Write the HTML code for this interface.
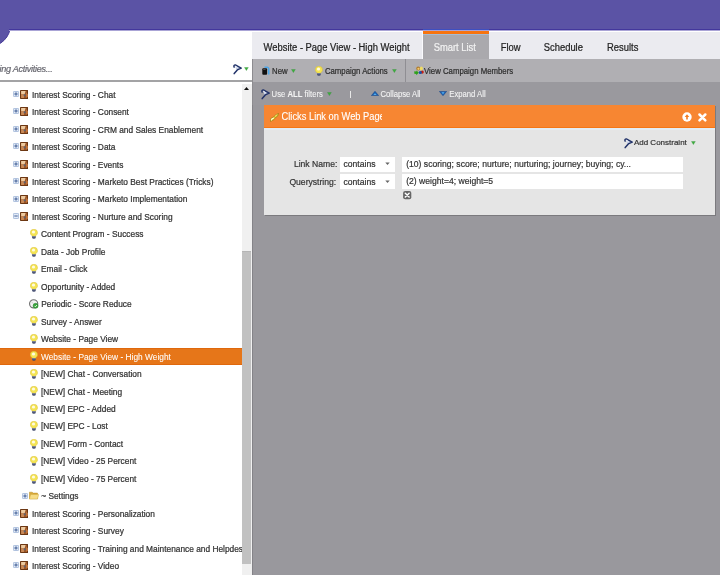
<!DOCTYPE html>
<html><head><meta charset="utf-8">
<style>
*{margin:0;padding:0;box-sizing:border-box}
svg{display:block}
html,body{width:720px;height:575px;overflow:hidden;background:#99989d;font-family:"Liberation Sans",sans-serif;-webkit-text-stroke-width:0.2px}
.abs{position:absolute}
#hdr{position:absolute;left:0;top:0;width:720px;height:29px;background:#5b53a5}
#hline{position:absolute;left:9px;top:29px;width:712px;height:1px;background:#43379c}
#hline2{position:absolute;left:9px;top:30px;width:712px;height:1px;background:#aaa4d6}
#bump{position:absolute;left:-33px;top:3px;width:44px;height:44px;border-radius:50%;background:#5b53a5;border:1.2px solid #463b98}
#side{position:absolute;left:0;top:30px;width:252px;height:545px;background:#fff;overflow:hidden}
#sidehdr{position:absolute;left:0;top:0;width:252px;height:50px;background:#fff}
#sideline{position:absolute;left:0;top:49.7px;width:252px;height:2.3px;background:#a3a3a5}
.row{position:absolute;left:0;width:241.5px;height:17.46px;font-size:8.35px;letter-spacing:0px;-webkit-text-stroke-width:0.22px;line-height:17.46px;color:#333;white-space:nowrap}
.row i{position:absolute;display:block;line-height:0}
.row .tt{position:absolute;top:1.0px;transform:scaleY(1.1);transform-origin:0 11.6px}
.row.sel{background:#e67619;border-top:1px solid #df680d;border-bottom:1px solid #df680d;color:#fff;-webkit-text-stroke-width:0.05px}
.row.sel .tt{top:0.3px}
.row.sel i{margin-top:-1px}
#tree{position:absolute;left:0;top:0;width:252px;height:575px;overflow:hidden}
#wrap{position:absolute;left:0;top:0;width:720px;height:575px;will-change:transform}
#track{position:absolute;left:241.5px;top:84px;width:10.5px;height:491px;background:#f0f0f0}
#thumb{position:absolute;left:242.2px;top:251.1px;width:8.5px;height:312.5px;background:#c1c1c1;border-top:1px solid #b5b5b5}
#sbar{position:absolute;left:252.3px;top:82px;width:1.2px;height:493px;background:#848388}
#tabs{position:absolute;left:252px;top:31px;width:468px;height:28px;background:#ebebf0;border-top:1px solid #fff;font-size:9.4px;color:#222}
#tabs .t{transform:scaleY(1.13);transform-origin:0 8.3px}
.tab{position:absolute;top:0;height:28px;line-height:28px;white-space:nowrap}
#tb1{position:absolute;left:252px;top:59px;width:468px;height:23px;background:#b0afb3;border-left:1px solid #8d8c90;font-size:7.8px;color:#2e2e2e}
#tb2{position:absolute;left:252px;top:82px;width:468px;height:23px;background:#9a999e;border-left:1px solid #8d8c90;font-size:7.7px;color:#f4f4f4;-webkit-text-stroke-width:0.08px}
.t{position:absolute;white-space:nowrap;line-height:10px}
#tb1 .t{transform:scaleY(1.1);transform-origin:0 7.7px;margin-top:1.1px}
#tb2 .t{transform:scaleY(1.16);transform-origin:0 7.7px;margin-top:0.9px}
.tri{position:absolute;width:0;height:0;border-left:2px solid transparent;border-right:2px solid transparent;border-top:3px solid #3fa53a}
#panel{position:absolute;left:263.5px;top:105px;width:451.5px;height:110px;background:#e5e5e5;box-shadow:1px 1px 0 #7b7a7e}
#phdr{position:absolute;left:0;top:0;width:451.5px;height:23px;background:#f78632;border-bottom:1.3px solid #f57716;overflow:hidden}
#phl{position:absolute;left:0;top:23.2px;width:451.5px;height:1.6px;background:#e3edf5}
.lbl{position:absolute;font-size:8.6px;color:#333;white-space:nowrap;line-height:10px}
.box{position:absolute;background:#fff;font-size:8.6px;color:#333;white-space:nowrap;line-height:15px}
.bt{display:inline-block;transform:scaleY(1.12);transform-origin:0 10.5px;margin-top:0.7px;vertical-align:top}
</style></head><body><div id="wrap">
<div id="side">
  <div id="sidehdr">
    <div class="abs" style="left:-26.6px;top:34px;font-size:9.1px;letter-spacing:-0.28px;font-style:italic;color:#66666e;white-space:nowrap;line-height:10px">Marketing Activities...</div>
  </div>
  <div id="sideline"></div>
  <i class="abs" style="left:233.4px;top:33.5px;line-height:0"><svg width="9" height="11" viewBox="0 0 9 11"><path d="M2.2 1.5L7.2 4.1L3.2 5.6Z" fill="#c4cfe8"/><path d="M1.1 3.1Q0.4 1.0 2.3 0.9L8.2 4.1L4.3 5.9L1.2 9.6" stroke="#22336a" stroke-width="1.5" stroke-linejoin="round" stroke-linecap="round" fill="none"/><path d="M2.3 2.2L4.4 3.5" stroke="#fff" stroke-width="0.9"/></svg></i>
  <i class="abs" style="left:243.9px;top:36.7px;;line-height:0"><svg width="5" height="4" viewBox="0 0 5 4"><path d="M0.5 0.5H4.3L2.4 3.6Z" fill="#3cae3c" stroke="#2a8a2e" stroke-width="0.3"/></svg></i>
</div>
<div id="tree">
<div class="row" style="top:85.70px"><i class="ex" style="left:12.5px;top:5.2px"><svg width="6" height="6" viewBox="0 0 6 6"><rect x="0.35" y="0.35" width="5.3" height="5.3" rx="1.1" fill="#e4ecf8" stroke="#86a1cc" stroke-width="0.7"/><path d="M1.3 3h3.4" stroke="#34548c" stroke-width="0.9"/><path d="M3 1.3v3.4" stroke="#34548c" stroke-width="0.9"/></svg></i><i class="ic" style="left:20.4px;top:4.1px"><svg width="8" height="9" viewBox="0 0 8 9"><rect x="0" y="0" width="8.2" height="9" rx="0.9" fill="#5a2a0b"/><rect x="0.7" y="0.7" width="6.6" height="7.6" fill="#9c5627"/><path d="M1.1 1.1H5.6L4.6 4.2H1.1Z" fill="#eccaa0"/><path d="M1.1 4.2H4.6L3.8 7.9H1.1Z" fill="#c98a58"/><circle cx="4.7" cy="5.3" r="1.1" fill="#5d6270"/><path d="M6 2.6L7.9 4.2V6.8L6 7.8Z" fill="#c0733a"/></svg></i><span class="tt" style="left:32px">Interest Scoring - Chat</span></div>
<div class="row" style="top:103.16px"><i class="ex" style="left:12.5px;top:5.2px"><svg width="6" height="6" viewBox="0 0 6 6"><rect x="0.35" y="0.35" width="5.3" height="5.3" rx="1.1" fill="#e4ecf8" stroke="#86a1cc" stroke-width="0.7"/><path d="M1.3 3h3.4" stroke="#34548c" stroke-width="0.9"/><path d="M3 1.3v3.4" stroke="#34548c" stroke-width="0.9"/></svg></i><i class="ic" style="left:20.4px;top:4.1px"><svg width="8" height="9" viewBox="0 0 8 9"><rect x="0" y="0" width="8.2" height="9" rx="0.9" fill="#5a2a0b"/><rect x="0.7" y="0.7" width="6.6" height="7.6" fill="#9c5627"/><path d="M1.1 1.1H5.6L4.6 4.2H1.1Z" fill="#eccaa0"/><path d="M1.1 4.2H4.6L3.8 7.9H1.1Z" fill="#c98a58"/><circle cx="4.7" cy="5.3" r="1.1" fill="#5d6270"/><path d="M6 2.6L7.9 4.2V6.8L6 7.8Z" fill="#c0733a"/></svg></i><span class="tt" style="left:32px">Interest Scoring - Consent</span></div>
<div class="row" style="top:120.62px"><i class="ex" style="left:12.5px;top:5.2px"><svg width="6" height="6" viewBox="0 0 6 6"><rect x="0.35" y="0.35" width="5.3" height="5.3" rx="1.1" fill="#e4ecf8" stroke="#86a1cc" stroke-width="0.7"/><path d="M1.3 3h3.4" stroke="#34548c" stroke-width="0.9"/><path d="M3 1.3v3.4" stroke="#34548c" stroke-width="0.9"/></svg></i><i class="ic" style="left:20.4px;top:4.1px"><svg width="8" height="9" viewBox="0 0 8 9"><rect x="0" y="0" width="8.2" height="9" rx="0.9" fill="#5a2a0b"/><rect x="0.7" y="0.7" width="6.6" height="7.6" fill="#9c5627"/><path d="M1.1 1.1H5.6L4.6 4.2H1.1Z" fill="#eccaa0"/><path d="M1.1 4.2H4.6L3.8 7.9H1.1Z" fill="#c98a58"/><circle cx="4.7" cy="5.3" r="1.1" fill="#5d6270"/><path d="M6 2.6L7.9 4.2V6.8L6 7.8Z" fill="#c0733a"/></svg></i><span class="tt" style="left:32px">Interest Scoring - CRM and Sales Enablement</span></div>
<div class="row" style="top:138.08px"><i class="ex" style="left:12.5px;top:5.2px"><svg width="6" height="6" viewBox="0 0 6 6"><rect x="0.35" y="0.35" width="5.3" height="5.3" rx="1.1" fill="#e4ecf8" stroke="#86a1cc" stroke-width="0.7"/><path d="M1.3 3h3.4" stroke="#34548c" stroke-width="0.9"/><path d="M3 1.3v3.4" stroke="#34548c" stroke-width="0.9"/></svg></i><i class="ic" style="left:20.4px;top:4.1px"><svg width="8" height="9" viewBox="0 0 8 9"><rect x="0" y="0" width="8.2" height="9" rx="0.9" fill="#5a2a0b"/><rect x="0.7" y="0.7" width="6.6" height="7.6" fill="#9c5627"/><path d="M1.1 1.1H5.6L4.6 4.2H1.1Z" fill="#eccaa0"/><path d="M1.1 4.2H4.6L3.8 7.9H1.1Z" fill="#c98a58"/><circle cx="4.7" cy="5.3" r="1.1" fill="#5d6270"/><path d="M6 2.6L7.9 4.2V6.8L6 7.8Z" fill="#c0733a"/></svg></i><span class="tt" style="left:32px">Interest Scoring - Data</span></div>
<div class="row" style="top:155.54px"><i class="ex" style="left:12.5px;top:5.2px"><svg width="6" height="6" viewBox="0 0 6 6"><rect x="0.35" y="0.35" width="5.3" height="5.3" rx="1.1" fill="#e4ecf8" stroke="#86a1cc" stroke-width="0.7"/><path d="M1.3 3h3.4" stroke="#34548c" stroke-width="0.9"/><path d="M3 1.3v3.4" stroke="#34548c" stroke-width="0.9"/></svg></i><i class="ic" style="left:20.4px;top:4.1px"><svg width="8" height="9" viewBox="0 0 8 9"><rect x="0" y="0" width="8.2" height="9" rx="0.9" fill="#5a2a0b"/><rect x="0.7" y="0.7" width="6.6" height="7.6" fill="#9c5627"/><path d="M1.1 1.1H5.6L4.6 4.2H1.1Z" fill="#eccaa0"/><path d="M1.1 4.2H4.6L3.8 7.9H1.1Z" fill="#c98a58"/><circle cx="4.7" cy="5.3" r="1.1" fill="#5d6270"/><path d="M6 2.6L7.9 4.2V6.8L6 7.8Z" fill="#c0733a"/></svg></i><span class="tt" style="left:32px">Interest Scoring - Events</span></div>
<div class="row" style="top:173.00px"><i class="ex" style="left:12.5px;top:5.2px"><svg width="6" height="6" viewBox="0 0 6 6"><rect x="0.35" y="0.35" width="5.3" height="5.3" rx="1.1" fill="#e4ecf8" stroke="#86a1cc" stroke-width="0.7"/><path d="M1.3 3h3.4" stroke="#34548c" stroke-width="0.9"/><path d="M3 1.3v3.4" stroke="#34548c" stroke-width="0.9"/></svg></i><i class="ic" style="left:20.4px;top:4.1px"><svg width="8" height="9" viewBox="0 0 8 9"><rect x="0" y="0" width="8.2" height="9" rx="0.9" fill="#5a2a0b"/><rect x="0.7" y="0.7" width="6.6" height="7.6" fill="#9c5627"/><path d="M1.1 1.1H5.6L4.6 4.2H1.1Z" fill="#eccaa0"/><path d="M1.1 4.2H4.6L3.8 7.9H1.1Z" fill="#c98a58"/><circle cx="4.7" cy="5.3" r="1.1" fill="#5d6270"/><path d="M6 2.6L7.9 4.2V6.8L6 7.8Z" fill="#c0733a"/></svg></i><span class="tt" style="left:32px">Interest Scoring - Marketo Best Practices (Tricks)</span></div>
<div class="row" style="top:190.46px"><i class="ex" style="left:12.5px;top:5.2px"><svg width="6" height="6" viewBox="0 0 6 6"><rect x="0.35" y="0.35" width="5.3" height="5.3" rx="1.1" fill="#e4ecf8" stroke="#86a1cc" stroke-width="0.7"/><path d="M1.3 3h3.4" stroke="#34548c" stroke-width="0.9"/><path d="M3 1.3v3.4" stroke="#34548c" stroke-width="0.9"/></svg></i><i class="ic" style="left:20.4px;top:4.1px"><svg width="8" height="9" viewBox="0 0 8 9"><rect x="0" y="0" width="8.2" height="9" rx="0.9" fill="#5a2a0b"/><rect x="0.7" y="0.7" width="6.6" height="7.6" fill="#9c5627"/><path d="M1.1 1.1H5.6L4.6 4.2H1.1Z" fill="#eccaa0"/><path d="M1.1 4.2H4.6L3.8 7.9H1.1Z" fill="#c98a58"/><circle cx="4.7" cy="5.3" r="1.1" fill="#5d6270"/><path d="M6 2.6L7.9 4.2V6.8L6 7.8Z" fill="#c0733a"/></svg></i><span class="tt" style="left:32px">Interest Scoring - Marketo Implementation</span></div>
<div class="row" style="top:207.92px"><i class="ex" style="left:12.5px;top:5.2px"><svg width="6" height="6" viewBox="0 0 6 6"><rect x="0.35" y="0.35" width="5.3" height="5.3" rx="1.1" fill="#e4ecf8" stroke="#86a1cc" stroke-width="0.7"/><path d="M1.3 3h3.4" stroke="#34548c" stroke-width="0.9"/></svg></i><i class="ic" style="left:20.4px;top:4.1px"><svg width="8" height="9" viewBox="0 0 8 9"><rect x="0" y="0" width="8.2" height="9" rx="0.9" fill="#5a2a0b"/><rect x="0.7" y="0.7" width="6.6" height="7.6" fill="#9c5627"/><path d="M1.1 1.1H5.6L4.6 4.2H1.1Z" fill="#eccaa0"/><path d="M1.1 4.2H4.6L3.8 7.9H1.1Z" fill="#c98a58"/><circle cx="4.7" cy="5.3" r="1.1" fill="#5d6270"/><path d="M6 2.6L7.9 4.2V6.8L6 7.8Z" fill="#c0733a"/></svg></i><span class="tt" style="left:32px">Interest Scoring - Nurture and Scoring</span></div>
<div class="row" style="top:225.38px"><i class="ic" style="left:30px;top:3.8px"><svg width="8" height="10" viewBox="0 0 8 10"><path d="M3.9 0.2A3.6 3.6 0 0 1 7.5 3.8C7.5 5.2 6.5 5.9 5.9 6.6L5.8 7.4H2L1.9 6.6C1.3 5.9 0.3 5.2 0.3 3.8A3.6 3.6 0 0 1 3.9 0.2Z" fill="#f4e454" stroke="#d9bd33" stroke-width="0.5"/><ellipse cx="3.5" cy="3" rx="1.6" ry="1.5" fill="#fffbe0"/><path d="M2.1 7.2H5.7V8.8Q5.7 9.8 3.9 9.8Q2.1 9.8 2.1 8.8Z" fill="#3f476a"/><rect x="2.2" y="7.5" width="3.4" height="0.7" fill="#8c9abf"/></svg></i><span class="tt" style="left:41px">Content Program - Success</span></div>
<div class="row" style="top:242.84px"><i class="ic" style="left:30px;top:3.8px"><svg width="8" height="10" viewBox="0 0 8 10"><path d="M3.9 0.2A3.6 3.6 0 0 1 7.5 3.8C7.5 5.2 6.5 5.9 5.9 6.6L5.8 7.4H2L1.9 6.6C1.3 5.9 0.3 5.2 0.3 3.8A3.6 3.6 0 0 1 3.9 0.2Z" fill="#f4e454" stroke="#d9bd33" stroke-width="0.5"/><ellipse cx="3.5" cy="3" rx="1.6" ry="1.5" fill="#fffbe0"/><path d="M2.1 7.2H5.7V8.8Q5.7 9.8 3.9 9.8Q2.1 9.8 2.1 8.8Z" fill="#3f476a"/><rect x="2.2" y="7.5" width="3.4" height="0.7" fill="#8c9abf"/></svg></i><span class="tt" style="left:41px">Data - Job Profile</span></div>
<div class="row" style="top:260.30px"><i class="ic" style="left:30px;top:3.8px"><svg width="8" height="10" viewBox="0 0 8 10"><path d="M3.9 0.2A3.6 3.6 0 0 1 7.5 3.8C7.5 5.2 6.5 5.9 5.9 6.6L5.8 7.4H2L1.9 6.6C1.3 5.9 0.3 5.2 0.3 3.8A3.6 3.6 0 0 1 3.9 0.2Z" fill="#f4e454" stroke="#d9bd33" stroke-width="0.5"/><ellipse cx="3.5" cy="3" rx="1.6" ry="1.5" fill="#fffbe0"/><path d="M2.1 7.2H5.7V8.8Q5.7 9.8 3.9 9.8Q2.1 9.8 2.1 8.8Z" fill="#3f476a"/><rect x="2.2" y="7.5" width="3.4" height="0.7" fill="#8c9abf"/></svg></i><span class="tt" style="left:41px">Email - Click</span></div>
<div class="row" style="top:277.76px"><i class="ic" style="left:30px;top:3.8px"><svg width="8" height="10" viewBox="0 0 8 10"><path d="M3.9 0.2A3.6 3.6 0 0 1 7.5 3.8C7.5 5.2 6.5 5.9 5.9 6.6L5.8 7.4H2L1.9 6.6C1.3 5.9 0.3 5.2 0.3 3.8A3.6 3.6 0 0 1 3.9 0.2Z" fill="#f4e454" stroke="#d9bd33" stroke-width="0.5"/><ellipse cx="3.5" cy="3" rx="1.6" ry="1.5" fill="#fffbe0"/><path d="M2.1 7.2H5.7V8.8Q5.7 9.8 3.9 9.8Q2.1 9.8 2.1 8.8Z" fill="#3f476a"/><rect x="2.2" y="7.5" width="3.4" height="0.7" fill="#8c9abf"/></svg></i><span class="tt" style="left:41px">Opportunity - Added</span></div>
<div class="row" style="top:295.22px"><i class="ic" style="left:29px;top:4px"><svg width="10" height="10" viewBox="0 0 10 10"><circle cx="4.65" cy="4.85" r="4.1" fill="#f3f3f3" stroke="#6e6e6e" stroke-width="1.1"/><path d="M2.2 2.6L4.6 4.8" stroke="#c8c8c8" stroke-width="0.8"/><circle cx="6.6" cy="6.8" r="2.5" fill="#3aa43c" stroke="#1e7f26" stroke-width="0.5"/><path d="M5.5 6.9l0.9 0.9 1.5-1.8" stroke="#fff" stroke-width="0.8" fill="none"/></svg></i><span class="tt" style="left:41.2px">Periodic - Score Reduce</span></div>
<div class="row" style="top:312.68px"><i class="ic" style="left:30px;top:3.8px"><svg width="8" height="10" viewBox="0 0 8 10"><path d="M3.9 0.2A3.6 3.6 0 0 1 7.5 3.8C7.5 5.2 6.5 5.9 5.9 6.6L5.8 7.4H2L1.9 6.6C1.3 5.9 0.3 5.2 0.3 3.8A3.6 3.6 0 0 1 3.9 0.2Z" fill="#f4e454" stroke="#d9bd33" stroke-width="0.5"/><ellipse cx="3.5" cy="3" rx="1.6" ry="1.5" fill="#fffbe0"/><path d="M2.1 7.2H5.7V8.8Q5.7 9.8 3.9 9.8Q2.1 9.8 2.1 8.8Z" fill="#3f476a"/><rect x="2.2" y="7.5" width="3.4" height="0.7" fill="#8c9abf"/></svg></i><span class="tt" style="left:41px">Survey - Answer</span></div>
<div class="row" style="top:330.14px"><i class="ic" style="left:30px;top:3.8px"><svg width="8" height="10" viewBox="0 0 8 10"><path d="M3.9 0.2A3.6 3.6 0 0 1 7.5 3.8C7.5 5.2 6.5 5.9 5.9 6.6L5.8 7.4H2L1.9 6.6C1.3 5.9 0.3 5.2 0.3 3.8A3.6 3.6 0 0 1 3.9 0.2Z" fill="#f4e454" stroke="#d9bd33" stroke-width="0.5"/><ellipse cx="3.5" cy="3" rx="1.6" ry="1.5" fill="#fffbe0"/><path d="M2.1 7.2H5.7V8.8Q5.7 9.8 3.9 9.8Q2.1 9.8 2.1 8.8Z" fill="#3f476a"/><rect x="2.2" y="7.5" width="3.4" height="0.7" fill="#8c9abf"/></svg></i><span class="tt" style="left:41px">Website - Page View</span></div>
<div class="row sel" style="top:347.60px"><i class="ic" style="left:30px;top:3.8px"><svg width="8" height="10" viewBox="0 0 8 10"><path d="M3.9 0.2A3.6 3.6 0 0 1 7.5 3.8C7.5 5.2 6.5 5.9 5.9 6.6L5.8 7.4H2L1.9 6.6C1.3 5.9 0.3 5.2 0.3 3.8A3.6 3.6 0 0 1 3.9 0.2Z" fill="#f4e454" stroke="#d9bd33" stroke-width="0.5"/><ellipse cx="3.5" cy="3" rx="1.6" ry="1.5" fill="#fffbe0"/><path d="M2.1 7.2H5.7V8.8Q5.7 9.8 3.9 9.8Q2.1 9.8 2.1 8.8Z" fill="#3f476a"/><rect x="2.2" y="7.5" width="3.4" height="0.7" fill="#8c9abf"/></svg></i><span class="tt" style="left:41px">Website - Page View - High Weight</span></div>
<div class="row" style="top:365.06px"><i class="ic" style="left:30px;top:3.8px"><svg width="8" height="10" viewBox="0 0 8 10"><path d="M3.9 0.2A3.6 3.6 0 0 1 7.5 3.8C7.5 5.2 6.5 5.9 5.9 6.6L5.8 7.4H2L1.9 6.6C1.3 5.9 0.3 5.2 0.3 3.8A3.6 3.6 0 0 1 3.9 0.2Z" fill="#f4e454" stroke="#d9bd33" stroke-width="0.5"/><ellipse cx="3.5" cy="3" rx="1.6" ry="1.5" fill="#fffbe0"/><path d="M2.1 7.2H5.7V8.8Q5.7 9.8 3.9 9.8Q2.1 9.8 2.1 8.8Z" fill="#3f476a"/><rect x="2.2" y="7.5" width="3.4" height="0.7" fill="#8c9abf"/></svg></i><span class="tt" style="left:41px">[NEW] Chat - Conversation</span></div>
<div class="row" style="top:382.52px"><i class="ic" style="left:30px;top:3.8px"><svg width="8" height="10" viewBox="0 0 8 10"><path d="M3.9 0.2A3.6 3.6 0 0 1 7.5 3.8C7.5 5.2 6.5 5.9 5.9 6.6L5.8 7.4H2L1.9 6.6C1.3 5.9 0.3 5.2 0.3 3.8A3.6 3.6 0 0 1 3.9 0.2Z" fill="#f4e454" stroke="#d9bd33" stroke-width="0.5"/><ellipse cx="3.5" cy="3" rx="1.6" ry="1.5" fill="#fffbe0"/><path d="M2.1 7.2H5.7V8.8Q5.7 9.8 3.9 9.8Q2.1 9.8 2.1 8.8Z" fill="#3f476a"/><rect x="2.2" y="7.5" width="3.4" height="0.7" fill="#8c9abf"/></svg></i><span class="tt" style="left:41px">[NEW] Chat - Meeting</span></div>
<div class="row" style="top:399.98px"><i class="ic" style="left:30px;top:3.8px"><svg width="8" height="10" viewBox="0 0 8 10"><path d="M3.9 0.2A3.6 3.6 0 0 1 7.5 3.8C7.5 5.2 6.5 5.9 5.9 6.6L5.8 7.4H2L1.9 6.6C1.3 5.9 0.3 5.2 0.3 3.8A3.6 3.6 0 0 1 3.9 0.2Z" fill="#f4e454" stroke="#d9bd33" stroke-width="0.5"/><ellipse cx="3.5" cy="3" rx="1.6" ry="1.5" fill="#fffbe0"/><path d="M2.1 7.2H5.7V8.8Q5.7 9.8 3.9 9.8Q2.1 9.8 2.1 8.8Z" fill="#3f476a"/><rect x="2.2" y="7.5" width="3.4" height="0.7" fill="#8c9abf"/></svg></i><span class="tt" style="left:41px">[NEW] EPC - Added</span></div>
<div class="row" style="top:417.44px"><i class="ic" style="left:30px;top:3.8px"><svg width="8" height="10" viewBox="0 0 8 10"><path d="M3.9 0.2A3.6 3.6 0 0 1 7.5 3.8C7.5 5.2 6.5 5.9 5.9 6.6L5.8 7.4H2L1.9 6.6C1.3 5.9 0.3 5.2 0.3 3.8A3.6 3.6 0 0 1 3.9 0.2Z" fill="#f4e454" stroke="#d9bd33" stroke-width="0.5"/><ellipse cx="3.5" cy="3" rx="1.6" ry="1.5" fill="#fffbe0"/><path d="M2.1 7.2H5.7V8.8Q5.7 9.8 3.9 9.8Q2.1 9.8 2.1 8.8Z" fill="#3f476a"/><rect x="2.2" y="7.5" width="3.4" height="0.7" fill="#8c9abf"/></svg></i><span class="tt" style="left:41px">[NEW] EPC - Lost</span></div>
<div class="row" style="top:434.90px"><i class="ic" style="left:30px;top:3.8px"><svg width="8" height="10" viewBox="0 0 8 10"><path d="M3.9 0.2A3.6 3.6 0 0 1 7.5 3.8C7.5 5.2 6.5 5.9 5.9 6.6L5.8 7.4H2L1.9 6.6C1.3 5.9 0.3 5.2 0.3 3.8A3.6 3.6 0 0 1 3.9 0.2Z" fill="#f4e454" stroke="#d9bd33" stroke-width="0.5"/><ellipse cx="3.5" cy="3" rx="1.6" ry="1.5" fill="#fffbe0"/><path d="M2.1 7.2H5.7V8.8Q5.7 9.8 3.9 9.8Q2.1 9.8 2.1 8.8Z" fill="#3f476a"/><rect x="2.2" y="7.5" width="3.4" height="0.7" fill="#8c9abf"/></svg></i><span class="tt" style="left:41px">[NEW] Form - Contact</span></div>
<div class="row" style="top:452.36px"><i class="ic" style="left:30px;top:3.8px"><svg width="8" height="10" viewBox="0 0 8 10"><path d="M3.9 0.2A3.6 3.6 0 0 1 7.5 3.8C7.5 5.2 6.5 5.9 5.9 6.6L5.8 7.4H2L1.9 6.6C1.3 5.9 0.3 5.2 0.3 3.8A3.6 3.6 0 0 1 3.9 0.2Z" fill="#f4e454" stroke="#d9bd33" stroke-width="0.5"/><ellipse cx="3.5" cy="3" rx="1.6" ry="1.5" fill="#fffbe0"/><path d="M2.1 7.2H5.7V8.8Q5.7 9.8 3.9 9.8Q2.1 9.8 2.1 8.8Z" fill="#3f476a"/><rect x="2.2" y="7.5" width="3.4" height="0.7" fill="#8c9abf"/></svg></i><span class="tt" style="left:41px">[NEW] Video - 25 Percent</span></div>
<div class="row" style="top:469.82px"><i class="ic" style="left:30px;top:3.8px"><svg width="8" height="10" viewBox="0 0 8 10"><path d="M3.9 0.2A3.6 3.6 0 0 1 7.5 3.8C7.5 5.2 6.5 5.9 5.9 6.6L5.8 7.4H2L1.9 6.6C1.3 5.9 0.3 5.2 0.3 3.8A3.6 3.6 0 0 1 3.9 0.2Z" fill="#f4e454" stroke="#d9bd33" stroke-width="0.5"/><ellipse cx="3.5" cy="3" rx="1.6" ry="1.5" fill="#fffbe0"/><path d="M2.1 7.2H5.7V8.8Q5.7 9.8 3.9 9.8Q2.1 9.8 2.1 8.8Z" fill="#3f476a"/><rect x="2.2" y="7.5" width="3.4" height="0.7" fill="#8c9abf"/></svg></i><span class="tt" style="left:41px">[NEW] Video - 75 Percent</span></div>
<div class="row" style="top:487.28px"><i class="ex" style="left:21.5px;top:5.3px"><svg width="6" height="6" viewBox="0 0 6 6"><rect x="0.35" y="0.35" width="5.3" height="5.3" rx="1.1" fill="#e4ecf8" stroke="#86a1cc" stroke-width="0.7"/><path d="M1.3 3h3.4" stroke="#34548c" stroke-width="0.9"/><path d="M3 1.3v3.4" stroke="#34548c" stroke-width="0.9"/></svg></i><i class="ic" style="left:29.2px;top:4.1px"><svg width="10" height="9" viewBox="0 0 10 9"><path d="M0.4 1.2h2.8l0.9 0.9h4.4v5.6h-8.1z" fill="#d9a93a" stroke="#b98a22" stroke-width="0.5"/><path d="M1.6 3.4h8.1l-1.2 4.6h-8.1z" fill="#f6dc86" stroke="#d2ad45" stroke-width="0.5"/></svg></i><span class="tt" style="left:41.2px">~ Settings</span></div>
<div class="row" style="top:504.74px"><i class="ex" style="left:12.5px;top:5.2px"><svg width="6" height="6" viewBox="0 0 6 6"><rect x="0.35" y="0.35" width="5.3" height="5.3" rx="1.1" fill="#e4ecf8" stroke="#86a1cc" stroke-width="0.7"/><path d="M1.3 3h3.4" stroke="#34548c" stroke-width="0.9"/><path d="M3 1.3v3.4" stroke="#34548c" stroke-width="0.9"/></svg></i><i class="ic" style="left:20.4px;top:4.1px"><svg width="8" height="9" viewBox="0 0 8 9"><rect x="0" y="0" width="8.2" height="9" rx="0.9" fill="#5a2a0b"/><rect x="0.7" y="0.7" width="6.6" height="7.6" fill="#9c5627"/><path d="M1.1 1.1H5.6L4.6 4.2H1.1Z" fill="#eccaa0"/><path d="M1.1 4.2H4.6L3.8 7.9H1.1Z" fill="#c98a58"/><circle cx="4.7" cy="5.3" r="1.1" fill="#5d6270"/><path d="M6 2.6L7.9 4.2V6.8L6 7.8Z" fill="#c0733a"/></svg></i><span class="tt" style="left:32px">Interest Scoring - Personalization</span></div>
<div class="row" style="top:522.20px"><i class="ex" style="left:12.5px;top:5.2px"><svg width="6" height="6" viewBox="0 0 6 6"><rect x="0.35" y="0.35" width="5.3" height="5.3" rx="1.1" fill="#e4ecf8" stroke="#86a1cc" stroke-width="0.7"/><path d="M1.3 3h3.4" stroke="#34548c" stroke-width="0.9"/><path d="M3 1.3v3.4" stroke="#34548c" stroke-width="0.9"/></svg></i><i class="ic" style="left:20.4px;top:4.1px"><svg width="8" height="9" viewBox="0 0 8 9"><rect x="0" y="0" width="8.2" height="9" rx="0.9" fill="#5a2a0b"/><rect x="0.7" y="0.7" width="6.6" height="7.6" fill="#9c5627"/><path d="M1.1 1.1H5.6L4.6 4.2H1.1Z" fill="#eccaa0"/><path d="M1.1 4.2H4.6L3.8 7.9H1.1Z" fill="#c98a58"/><circle cx="4.7" cy="5.3" r="1.1" fill="#5d6270"/><path d="M6 2.6L7.9 4.2V6.8L6 7.8Z" fill="#c0733a"/></svg></i><span class="tt" style="left:32px">Interest Scoring - Survey</span></div>
<div class="row" style="top:539.66px"><i class="ex" style="left:12.5px;top:5.2px"><svg width="6" height="6" viewBox="0 0 6 6"><rect x="0.35" y="0.35" width="5.3" height="5.3" rx="1.1" fill="#e4ecf8" stroke="#86a1cc" stroke-width="0.7"/><path d="M1.3 3h3.4" stroke="#34548c" stroke-width="0.9"/><path d="M3 1.3v3.4" stroke="#34548c" stroke-width="0.9"/></svg></i><i class="ic" style="left:20.4px;top:4.1px"><svg width="8" height="9" viewBox="0 0 8 9"><rect x="0" y="0" width="8.2" height="9" rx="0.9" fill="#5a2a0b"/><rect x="0.7" y="0.7" width="6.6" height="7.6" fill="#9c5627"/><path d="M1.1 1.1H5.6L4.6 4.2H1.1Z" fill="#eccaa0"/><path d="M1.1 4.2H4.6L3.8 7.9H1.1Z" fill="#c98a58"/><circle cx="4.7" cy="5.3" r="1.1" fill="#5d6270"/><path d="M6 2.6L7.9 4.2V6.8L6 7.8Z" fill="#c0733a"/></svg></i><span class="tt" style="left:32px">Interest Scoring - Training and Maintenance and Helpdesk</span></div>
<div class="row" style="top:557.12px"><i class="ex" style="left:12.5px;top:5.2px"><svg width="6" height="6" viewBox="0 0 6 6"><rect x="0.35" y="0.35" width="5.3" height="5.3" rx="1.1" fill="#e4ecf8" stroke="#86a1cc" stroke-width="0.7"/><path d="M1.3 3h3.4" stroke="#34548c" stroke-width="0.9"/><path d="M3 1.3v3.4" stroke="#34548c" stroke-width="0.9"/></svg></i><i class="ic" style="left:20.4px;top:4.1px"><svg width="8" height="9" viewBox="0 0 8 9"><rect x="0" y="0" width="8.2" height="9" rx="0.9" fill="#5a2a0b"/><rect x="0.7" y="0.7" width="6.6" height="7.6" fill="#9c5627"/><path d="M1.1 1.1H5.6L4.6 4.2H1.1Z" fill="#eccaa0"/><path d="M1.1 4.2H4.6L3.8 7.9H1.1Z" fill="#c98a58"/><circle cx="4.7" cy="5.3" r="1.1" fill="#5d6270"/><path d="M6 2.6L7.9 4.2V6.8L6 7.8Z" fill="#c0733a"/></svg></i><span class="tt" style="left:32px">Interest Scoring - Video</span></div>
</div>
<div id="track"></div>
<div id="thumb"></div>
<div id="sbar"></div>
<i class="abs" style="left:244.2px;top:87.2px;line-height:0"><svg width="5" height="3" viewBox="0 0 5 3"><path d="M2.5 0L5 2.9H0Z" fill="#111"/></svg></i>
<div id="bump"></div>
<div id="hdr"></div>
<div id="hline"></div>
<div id="hline2"></div>

<div id="tabs">
  <div class="abs" style="left:169.5px;top:-1px;width:1px;height:28px;background:#fafafd"></div>
  <div class="abs" style="left:170.5px;top:-1px;width:66.7px;height:28px;background:#aaa9ad;border-top:3px solid #f7740f"></div>
  <div class="abs" style="left:170.5px;top:-3px;width:66.7px;height:1px;background:#3e4fc0"></div>
  <div class="abs" style="left:170.5px;top:2px;width:66.7px;height:1px;background:#a7bcd2"></div>
  <div class="t" style="left:11.6px;top:10.9px">Website - Page View - High Weight</div>
  <div class="t" style="left:181.7px;top:10.9px;color:#f2f2f2">Smart List</div>
  <div class="t" style="left:248.7px;top:10.9px">Flow</div>
  <div class="t" style="left:291.8px;top:10.9px">Schedule</div>
  <div class="t" style="left:355.1px;top:10.9px">Results</div>
</div>
<div id="tb1">
  <i class="abs" style="left:9.3px;top:7px;line-height:0"><svg width="8" height="10" viewBox="0 0 8 10"><path d="M2.5 1.3h2.6a1.6 1.6 0 0 1 1.6 1.6v5.6" stroke="#4aa6e8" stroke-width="1.6" fill="none"/><rect x="0.3" y="2.3" width="4.8" height="6.4" rx="0.9" fill="#111"/><rect x="1.2" y="3" width="2.4" height="0.7" fill="#666"/></svg></i>
  <div class="t" style="left:19px;top:6.9px">New</div>
  <i class="abs" style="left:38.4px;top:10px;line-height:0"><svg width="5" height="4" viewBox="0 0 5 4"><path d="M0.5 0.5H4.3L2.4 3.6Z" fill="#3cae3c" stroke="#2a8a2e" stroke-width="0.3"/></svg></i>
  <i class="abs" style="left:62px;top:6.6px;line-height:0"><svg width="8" height="10" viewBox="0 0 8 10"><path d="M3.9 0.2A3.6 3.6 0 0 1 7.5 3.8C7.5 5.2 6.5 5.9 5.9 6.6L5.8 7.4H2L1.9 6.6C1.3 5.9 0.3 5.2 0.3 3.8A3.6 3.6 0 0 1 3.9 0.2Z" fill="#f4e454" stroke="#d9bd33" stroke-width="0.5"/><ellipse cx="3.5" cy="3" rx="1.6" ry="1.5" fill="#fffbe0"/><path d="M2.1 7.2H5.7V8.8Q5.7 9.8 3.9 9.8Q2.1 9.8 2.1 8.8Z" fill="#3f476a"/><rect x="2.2" y="7.5" width="3.4" height="0.7" fill="#8c9abf"/></svg></i>
  <div class="t" style="left:71.9px;top:6.9px">Campaign Actions</div>
  <i class="abs" style="left:139px;top:10px;line-height:0"><svg width="5" height="4" viewBox="0 0 5 4"><path d="M0.5 0.5H4.3L2.4 3.6Z" fill="#3cae3c" stroke="#2a8a2e" stroke-width="0.3"/></svg></i>
  <div class="abs" style="left:151.6px;top:0;width:1px;height:23px;background:#8f8e93"></div>
  <i class="abs" style="left:160.5px;top:6.8px;line-height:0"><svg width="10" height="10" viewBox="0 0 10 10"><circle cx="4.2" cy="2.5" r="1.9" fill="#b07a2a"/><circle cx="4.4" cy="2.8" r="1.1" fill="#f3c96a"/><ellipse cx="7.4" cy="2.6" rx="1.5" ry="2" fill="#f0dc62"/><circle cx="8.2" cy="6.1" r="1.6" fill="#c81e12"/><circle cx="6.3" cy="6.5" r="1.6" fill="#1850a8"/><path d="M0.3 5.2l2 0.2 0.4-1 2 2.3-2.3 2.5-0.2-1.3-1.9-0.2z" fill="#2ea21a"/></svg></i>
  <div class="t" style="left:171px;top:6.9px">View Campaign Members</div>
</div>
<div id="tb2">
  <i class="abs" style="left:8.4px;top:6.5px;line-height:0"><svg width="9" height="11" viewBox="0 0 9 11"><path d="M2.2 1.5L7.2 4.1L3.2 5.6Z" fill="#c4cfe8"/><path d="M1.1 3.1Q0.4 1.0 2.3 0.9L8.2 4.1L4.3 5.9L1.2 9.6" stroke="#22336a" stroke-width="1.5" stroke-linejoin="round" stroke-linecap="round" fill="none"/><path d="M2.3 2.2L4.4 3.5" stroke="#fff" stroke-width="0.9"/></svg></i>
  <div class="t" style="left:18.6px;top:7.05px">Use <b>ALL</b> filters</div>
  <i class="abs" style="left:73.6px;top:9.8px;line-height:0"><svg width="5" height="4" viewBox="0 0 5 4"><path d="M0.5 0.5H4.3L2.4 3.6Z" fill="#3cae3c" stroke="#2a8a2e" stroke-width="0.3"/></svg></i>
  <div class="abs" style="left:97.2px;top:8.7px;width:0.8px;height:7px;background:#e8e8e8"></div>
  <i class="abs" style="left:117.5px;top:8.8px;line-height:0"><svg width="8" height="5" viewBox="0 0 8 5"><path d="M4 0.3L7.6 4.6H0.4Z" fill="#1d64b5" stroke="#0e3f85" stroke-width="0.5"/><path d="M4 2.2L5.5 4H2.5Z" fill="#58b2f0"/></svg></i>
  <div class="t" style="left:127.4px;top:7.05px">Collapse All</div>
  <i class="abs" style="left:186.4px;top:8.6px;line-height:0"><svg width="8" height="5" viewBox="0 0 8 5"><path d="M0.4 0.4H7.6L4 4.7Z" fill="#1d64b5" stroke="#0e3f85" stroke-width="0.5"/><path d="M2.6 1.2H5.4L4 3.2Z" fill="#58b2f0"/></svg></i>
  <div class="t" style="left:196.3px;top:7.05px">Expand All</div>
</div>
<div id="panel">
  <div id="phdr">
    <i class="abs" style="left:6.3px;top:8px;line-height:0"><svg width="9" height="9" viewBox="0 0 9 9"><path d="M0.3 8.4L0.9 5.4L3.4 4.2L5.2 2.2L8.6 0.3L7.6 3.2L5.4 4.6L3.8 6.8Z" fill="#e2cf32" stroke="#8f7c15" stroke-width="0.6" stroke-linejoin="round"/><path d="M1.2 7.4L2.2 5.8L4 5" stroke="#fffbd2" stroke-width="1.2" fill="none"/><path d="M5 3.4L7.2 1.6" stroke="#f6ec8a" stroke-width="0.8"/></svg></i>
    <div class="t" style="left:18.1px;top:6.6px;width:100.4px;overflow:hidden;font-size:9.3px;color:#fff;-webkit-text-stroke-width:0.1px;transform:scaleY(1.15);transform-origin:0 8.2px">Clicks Link on Web Page</div>
    <i class="abs" style="left:418.3px;top:7.3px;line-height:0"><svg width="10" height="10" viewBox="0 0 10 10"><circle cx="5" cy="5" r="4.7" fill="#fff"/><path d="M5 2.3L7.3 5H5.8V7.6H4.2V5H2.7Z" fill="#f47c20"/></svg></i>
    <i class="abs" style="left:434.3px;top:7.5px;line-height:0"><svg width="9" height="9" viewBox="0 0 9 9"><path d="M1.5 1.5L7.3 7.3M7.3 1.5L1.5 7.3" stroke="#fff" stroke-width="2.5" stroke-linecap="round"/></svg></i>
  </div>
  <div id="phl"></div>
  <i class="abs" style="left:360.4px;top:32.6px;line-height:0"><svg width="9" height="11" viewBox="0 0 9 11"><path d="M2.2 1.5L7.2 4.1L3.2 5.6Z" fill="#c4cfe8"/><path d="M1.1 3.1Q0.4 1.0 2.3 0.9L8.2 4.1L4.3 5.9L1.2 9.6" stroke="#22336a" stroke-width="1.5" stroke-linejoin="round" stroke-linecap="round" fill="none"/><path d="M2.3 2.2L4.4 3.5" stroke="#fff" stroke-width="0.9"/></svg></i>
  <i class="abs" style="left:427.3px;top:36px;line-height:0"><svg width="5" height="4" viewBox="0 0 5 4"><path d="M0.5 0.5H4.3L2.4 3.6Z" fill="#3cae3c" stroke="#2a8a2e" stroke-width="0.3"/></svg></i>
  <i class="abs" style="left:139.3px;top:85.7px;line-height:0"><svg width="9" height="9" viewBox="0 0 9 9"><rect x="0.1" y="0.1" width="8.2" height="8.1" rx="2" fill="#666"/><path d="M2.3 2.3L6.1 6M6.1 2.3L2.3 6" stroke="#fff" stroke-width="1.5" stroke-linecap="round"/></svg></i>
  <div class="t" style="left:370.4px;top:32.8px;font-size:8px;color:#333">Add Constraint</div>
  <div class="lbl" style="left:30.4px;top:54.4px">Link Name:</div>
  <div class="lbl" style="left:25.9px;top:71.5px">Querystring:</div>
  <div class="box" style="left:76px;top:51.7px;width:55px;height:15px;padding-left:4px"><span class="bt">contains</span></div>
  <div class="box" style="left:76px;top:69px;width:55px;height:15px;padding-left:4px"><span class="bt">contains</span></div>
  <div class="box" style="left:138.6px;top:51.7px;width:280.6px;height:15px;padding-left:4.1px"><span class="bt">(10) scoring; score; nurture; nurturing; journey; buying; cy...</span></div>
  <div class="box" style="left:138.6px;top:68.8px;width:280.6px;height:15.5px;padding-left:4.1px"><span class="bt">(2) weight=4; weight=5</span></div>
  <i class="abs" style="left:121.3px;top:56.9px;line-height:0"><svg width="5" height="3" viewBox="0 0 5 3"><path d="M0.3 0.4H4.7L2.5 2.9Z" fill="#666"/></svg></i>
  <i class="abs" style="left:121.3px;top:74.7px;line-height:0"><svg width="5" height="3" viewBox="0 0 5 3"><path d="M0.3 0.4H4.7L2.5 2.9Z" fill="#666"/></svg></i>

</div>
</div></body></html>
